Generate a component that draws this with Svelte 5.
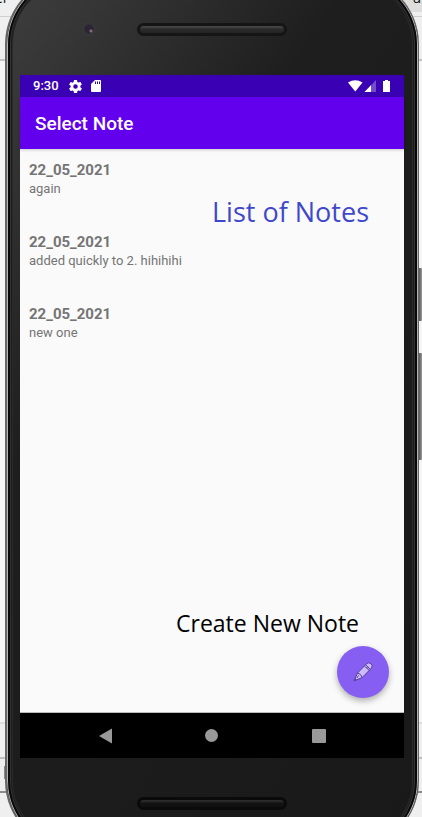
<script>
  const notes = [
    { date: '22_05_2021', text: 'again' },
    { date: '22_05_2021', text: 'added quickly to 2. hihihihi' },
    { date: '22_05_2021', text: 'new one' }
  ];
</script>

<div class="desktop">
  <span class="behind left">er</span>
  <span class="behind right">u</span>
  <span class="caret"></span>
  <span class="key power"></span>
  <span class="key volume"></span>

  <div class="phone">
    <div class="bezel top">
      <span class="camera"></span>
      <span class="speaker"></span>
    </div>

    <main class="screen">
      <div class="status">
        <span class="clock">9:30</span>
        <svg class="gear" width="13" height="13" viewBox="2 2 20 20" aria-hidden="true">
          <path fill="#fff" d="M19.4 13a7.500 7.500 0 0 0 0-2l2.100-1.650a.5.5 0 0 0 .12-.64l-2-3.460a.5.5 0 0 0-.61-.22l-2.490 1a7.300 7.300 0 0 0-1.690-.98l-.38-2.650A.49.49 0 0 0 14 2h-4a.49.49 0 0 0-.49.42l-.38 2.650c-.61.25-1.170.59-1.690.98l-2.490-1a.5.5 0 0 0-.61.22l-2 3.460a.5.5 0 0 0 .12.64L4.570 11a7.900 7.900 0 0 0 0 2l-2.110 1.650a.5.5 0 0 0-.12.64l2 3.460c.12.22.39.3.61.22l2.490-1c.52.4 1.080.73 1.690.98l.38 2.650c.03.24.24.42.49.42h4c.25 0 .46-.18.49-.42l.38-2.650a7.300 7.300 0 0 0 1.690-.98l2.490 1c.23.09.49 0 .61-.22l2-3.460a.5.5 0 0 0-.12-.64zM12 15.500a3.500 3.500 0 1 1 0-7 3.500 3.500 0 0 1 0 7z"/>
        </svg>
        <svg class="card" width="10" height="12" viewBox="0 0 10 12" aria-hidden="true">
          <path fill="#fff" fill-rule="evenodd" d="M4 0h5q1 0 1 1v10q0 1-1 1H1q-1 0-1-1V4zM4 1.500v2.500h1V1.500zM6 1.500v2.500h1V1.500zM8 1.500v2.500h1V1.500z"/>
        </svg>
        <svg class="radio" width="43" height="12" viewBox="0 0 43 12" aria-hidden="true">
          <path fill="#fff" d="M0 2.500Q7.200-2 14.500 2.500L7.300 11.500z"/>
          <path fill="#fff" fill-opacity=".3" d="M28 0v12H16.500z"/>
          <path fill="#fff" d="M23 5.200V12h-6.500z"/>
          <path fill="#fff" d="M35 1h2V0h3v1h2v11h-7z"/>
        </svg>
      </div>

      <header><h1>Select Note</h1></header>

      <section class="content">
        <ul>
          {#each notes as note}
            <li>
              <strong>{note.date}</strong>
              <span>{note.text}</span>
            </li>
          {/each}
        </ul>
        <p class="callout list">List of Notes</p>
        <p class="callout create">Create New Note</p>
        <button class="fab" aria-label="Create new note">
          <svg width="20" height="20" viewBox="0 0 20 20" aria-hidden="true">
            <g stroke="#54419b" stroke-width="1" stroke-linejoin="round">
              <path fill="#cdbbfa" d="M1 19L4.500 11 13.500 1.800Q15.500 0 18 1.600 20 3.500 18.600 6L9.200 15.500z"/>
              <path fill="none" d="M4.500 11Q8 11.500 9.200 15.500M5.600 13.400L3.800 16M11.400 4L16.400 8.600M12.600 2.800L17.500 7.400M13.800 5.200L15 6.400"/>
            </g>
            <path fill="#54419b" d="M1 19l1-2.800 1.800 1.600z"/>
          </svg>
        </button>
      </section>

      <nav>
        <button aria-label="Back">
          <svg width="13" height="16" viewBox="0 0 13 16" aria-hidden="true"><path fill="#999" d="M13 .5v15L0 8z"/></svg>
        </button>
        <button aria-label="Home"><span class="home"></span></button>
        <button aria-label="Recent apps"><span class="recent"></span></button>
      </nav>
    </main>

    <div class="bezel bottom"><span class="speaker"></span></div>
  </div>
</div>

<style>
  :global(body) {
    margin: 0;
  }
  .desktop {
    position: relative;
    height: 100vh;
    overflow: hidden;
    display: flex;
    box-sizing: border-box;
    padding: 0 3px 0 5px;
    font-family: Roboto, sans-serif;
    background:
      linear-gradient(#cfcfcf, #cfcfcf) 0 16px / 100% 1px no-repeat,
      linear-gradient(#c4c4c4, #c4c4c4) 0 59px / 100% 2px no-repeat,
      linear-gradient(#dedede, #dedede) 0 calc(100% - 93px) / 100% 2px no-repeat,
      linear-gradient(#c0c0c0, #c0c0c0) 0 calc(100% - 58px) / 100% 2px no-repeat,
      linear-gradient(#8c8c8c, #8c8c8c) 0 calc(100% - 24px) / 100% 2px no-repeat,
      linear-gradient(#efefef, #efefef) 0 100% / 100% 93px no-repeat,
      linear-gradient(#dedede, #dedede) 100% 0 / 40px 12px no-repeat,
      linear-gradient(#efefef, #efefef) 0 0 / 100% 60px no-repeat,
      #f5f5f5;
  }
  .behind {
    position: absolute;
    top: -11px;
    font: 14px/18px "Open Sans", sans-serif;
    color: #111;
  }
  .behind.left {
    left: -5px;
  }
  .behind.right {
    right: 1px;
  }
  .caret {
    position: absolute;
    left: 4px;
    bottom: 38px;
    width: 2px;
    height: 13px;
    background: #888;
  }
  .key {
    position: absolute;
    right: 0;
    width: 4px;
    background: linear-gradient(90deg, #444, #999);
    border-radius: 1px;
  }
  .power {
    top: 268px;
    height: 53px;
  }
  .volume {
    top: 353px;
    height: 107px;
  }
  .phone {
    position: relative;
    flex: 1;
    display: flex;
    flex-direction: column;
    box-sizing: border-box;
    margin: -24px 0 -32px;
    padding: 0 14px 0 13px;
    border: 1px solid #666;
    border-width: 1px 1px 1px 2px;
    border-radius: 68px;
    background: linear-gradient(125deg, #3e3e3e 0, #363636 10%, #1e1e1e 34%, #191919 100%);
    box-shadow:
      inset 0 0 0 1px #b4b4b4,
      inset 0 0 0 3px #080808,
      inset 0 0 0 4px #333,
      inset 0 0 0 5px #1c1c1c,
      inset 0 0 0 6px #2a2a2a;
  }
  .bezel {
    position: relative;
    display: flex;
    justify-content: center;
    flex: none;
    box-sizing: border-box;
  }
  .bezel.top {
    height: 98px;
    padding-top: 46px;
  }
  .bezel.bottom {
    height: 90px;
    padding-top: 39px;
  }
  .speaker {
    box-sizing: border-box;
    width: 150px;
    height: 13px;
    border: 3px solid #151515;
    border-radius: 7px;
    background: linear-gradient(#444 0 1px, #2b2b2b 3px, #242424);
  }
  .bottom .speaker {
    background: linear-gradient(#2c2c2c 0 1px, #131313 3px, #101010);
    border-color: #0a0a0a;
  }
  .camera {
    position: absolute;
    left: 62px;
    top: 45px;
    width: 14px;
    height: 14px;
    border-radius: 50%;
    background:
      radial-gradient(circle at 9px 9px, #8a6a70 0 1px, transparent 2px),
      radial-gradient(circle, #2a2438 0 4px, #333 5px, #3a3a3a 7px);
  }
  .screen {
    flex: 1;
    display: flex;
    flex-direction: column;
    min-height: 0;
    background: #fafafa;
  }
  .status {
    display: flex;
    align-items: center;
    height: 22px;
    padding: 0 13px;
    background: #3a00b3;
    color: #fff;
  }
  .clock {
    font-size: 13px;
    font-weight: 500;
    line-height: 22px;
  }
  .gear {
    margin-left: 10px;
  }
  .card {
    margin-left: 9px;
  }
  .radio {
    margin-left: auto;
  }
  header {
    position: relative;
    height: 52px;
    padding: 0 15px;
    background: #6200ee;
    box-shadow: 0 1px 3px rgba(0, 0, 0, 0.2);
  }
  h1 {
    margin: 0;
    font-size: 19px;
    font-weight: 500;
    line-height: 54px;
    color: #fff;
  }
  .content {
    position: relative;
    flex: 1;
    border-bottom: 1px solid #bbb;
  }
  ul {
    list-style: none;
    margin: 0;
    padding: 12px 9px;
    color: #757575;
  }
  li {
    display: flex;
    flex-direction: column;
    height: 72px;
  }
  strong {
    font-size: 15px;
    line-height: 19px;
  }
  li span {
    font-size: 13px;
    line-height: 18px;
  }
  .callout {
    position: absolute;
    margin: 0;
    font-family: "Open Sans", sans-serif;
    white-space: nowrap;
  }
  .list {
    top: 45px;
    right: 35px;
    font-size: 27px;
    line-height: 36px;
    color: #3f48cc;
  }
  .create {
    right: 45px;
    bottom: 73px;
    font-size: 23px;
    line-height: 32px;
    color: #000;
  }
  button {
    display: grid;
    place-items: center;
    padding: 0;
    border: 0;
    background: none;
  }
  .fab {
    position: absolute;
    right: 15px;
    bottom: 14px;
    width: 52px;
    height: 52px;
    border-radius: 50%;
    background: #865ff2;
    box-shadow: 0 3px 6px rgba(0, 0, 0, 0.3);
  }
  nav {
    display: grid;
    grid-template-columns: repeat(3, 1fr);
    height: 45px;
    padding: 0 32px;
    background: #000;
  }
  .home {
    width: 13px;
    height: 13px;
    border-radius: 50%;
    background: #999;
  }
  .recent {
    width: 14px;
    height: 14px;
    border-radius: 1px;
    background: #999;
  }
</style>
